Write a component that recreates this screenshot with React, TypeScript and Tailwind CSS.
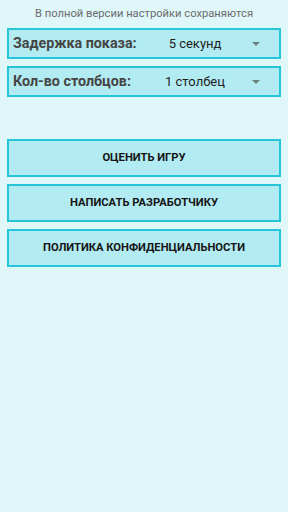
import React from "react";

const settings = [
    { label: "Задержка показа:", value: "5 секунд" },
    { label: "Кол-во столбцов:", value: "1 столбец" },
];

const buttons = ["ОЦЕНИТЬ ИГРУ", "НАПИСАТЬ РАЗРАБОТЧИКУ", "ПОЛИТИКА КОНФИДЕНЦИАЛЬНОСТИ"];

const App: React.FC = () => {
    return (
        <div
            className="w-[288px] h-[512px] bg-[#e0f7fa] px-[7px] flex flex-col"
            style={{ fontFamily: "Roboto, 'Noto Sans', sans-serif" }}
        >
            {/* Note */}
            <div className="h-[28px] pt-[1px] flex items-center justify-center text-[11.2px] text-[#6b6b6b]">
                В полной версии настройки сохраняются
            </div>

            {/* Spinners */}
            <div className="flex flex-col gap-[7px]">
                {settings.map((s) => (
                    <div
                        key={s.label}
                        className="h-[31px] border-2 border-[#26c6da] bg-[#b2ebf2] flex items-center pl-[4px] pr-[19px]"
                    >
                        <span className="text-[14.3px] font-bold text-[#454545] whitespace-nowrap">{s.label}</span>
                        <span className="ml-auto w-[110px] text-center text-[13px] text-[#1e1e1e]">{s.value}</span>
                        <svg width="8" height="4" viewBox="0 0 8 4" className="ml-[2px]">
                            <path d="M0 0 L8 0 L4 4 Z" fill="#6e7f82" />
                        </svg>
                    </div>
                ))}
            </div>

            {/* Buttons */}
            <div className="mt-[42px] flex flex-col gap-[7px]">
                {buttons.map((b) => (
                    <button
                        key={b}
                        className="h-[38px] border-2 border-[#26c6da] bg-[#b2ebf2] flex items-center justify-center text-[11.2px] font-bold text-[#151515]"
                    >
                        {b}
                    </button>
                ))}
            </div>
        </div>
    );
};

export default App;
